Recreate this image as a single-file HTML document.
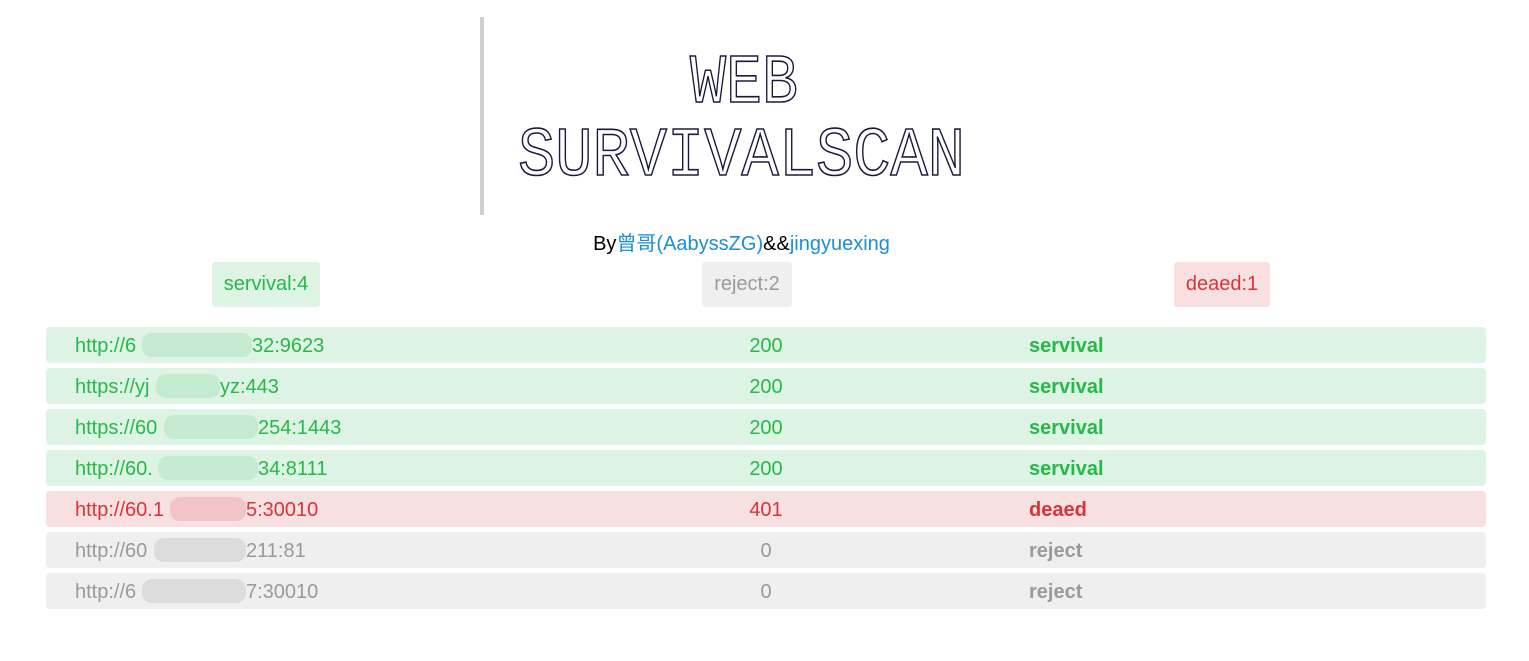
<!DOCTYPE html>
<html><head><meta charset="utf-8"><style>
body{margin:0;width:1529px;height:661px;background:#fff;font-family:"Liberation Sans","Noto Sans CJK SC",sans-serif;position:relative;overflow:hidden}
.vl{position:absolute;left:480px;top:17px;width:4px;height:198px;background:#cfcfcf}
.by{position:absolute;left:0;width:1483px;top:227px;text-align:center;font-size:20px;color:#000}
.by span{color:#1a8fd6}
.badge{position:absolute;top:262px;height:45px;line-height:45px;font-size:20px;border-radius:3px;text-align:center}
.row{position:absolute;left:46px;width:1440px;height:36px;border-radius:4px;font-size:20px;line-height:38px}
.row span{position:absolute;white-space:nowrap}
.row .c{left:650px;width:140px;text-align:center}
.row .s{left:983px;font-weight:bold}
.g{background:#ddf3e3;color:#26b94a}
.r{background:#f8e0e0;color:#d8353a}
.x{background:#efefef;color:#9a9a9a}
.blur{position:absolute;top:6px;height:24px;border-radius:10px}
.g .blur{background:#c4ebcf}.r .blur{background:#f2c4c6}.x .blur{background:#dcdcdc}
</style></head><body>
<div class="vl"></div>
<svg style="position:absolute;left:0;top:0" width="1529" height="220">
<g font-family="Liberation Mono, monospace" fill="#fff" stroke="#1a1a40" stroke-width="1.6">
<text x="690" y="102" font-size="70" textLength="108" lengthAdjust="spacingAndGlyphs">WEB</text>
<text x="518" y="175" font-size="70" textLength="447" lengthAdjust="spacingAndGlyphs">SURVIVALSCAN</text>
</g></svg>
<div class="by">By<span>曾哥(AabyssZG)</span>&amp;&amp;<span>jingyuexing</span></div>
<div class="badge g" style="left:212px;width:108px">servival:4</div>
<div class="badge x" style="left:702px;width:90px">reject:2</div>
<div class="badge r" style="left:1174px;width:96px">deaed:1</div>

<div class="row g" style="top:327px"><span style="left:29px">http://6</span><div class="blur" style="left:96px;width:110px"></div><span style="left:206px">32:9623</span><span class="c">200</span><span class="s">servival</span></div>
<div class="row g" style="top:368px"><span style="left:29px">https://yj</span><div class="blur" style="left:110px;width:64px"></div><span style="left:174px">yz:443</span><span class="c">200</span><span class="s">servival</span></div>
<div class="row g" style="top:409px"><span style="left:29px">https://60</span><div class="blur" style="left:118px;width:94px"></div><span style="left:212px">254:1443</span><span class="c">200</span><span class="s">servival</span></div>
<div class="row g" style="top:450px"><span style="left:29px">http://60.</span><div class="blur" style="left:112px;width:100px"></div><span style="left:212px">34:8111</span><span class="c">200</span><span class="s">servival</span></div>
<div class="row r" style="top:491px"><span style="left:29px">http://60.1</span><div class="blur" style="left:124px;width:76px"></div><span style="left:200px">5:30010</span><span class="c">401</span><span class="s">deaed</span></div>
<div class="row x" style="top:532px"><span style="left:29px">http://60</span><div class="blur" style="left:108px;width:92px"></div><span style="left:200px">211:81</span><span class="c">0</span><span class="s">reject</span></div>
<div class="row x" style="top:573px"><span style="left:29px">http://6</span><div class="blur" style="left:96px;width:104px"></div><span style="left:200px">7:30010</span><span class="c">0</span><span class="s">reject</span></div>
</body></html>
